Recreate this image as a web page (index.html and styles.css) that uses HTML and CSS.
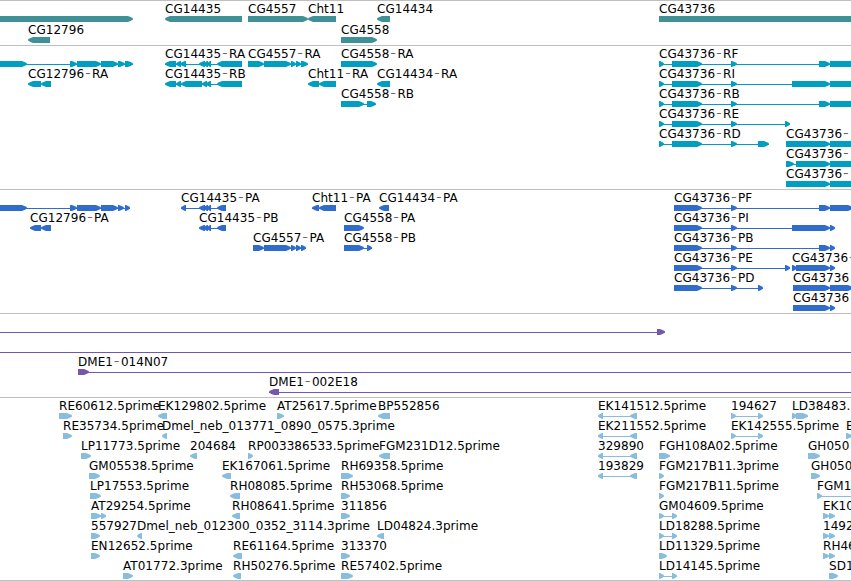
FILE: index.html
```
<!DOCTYPE html>
<html lang="en">
<head>
    <meta charset="UTF-8">
    <title>Genome browser</title>
    <link rel="stylesheet" href="styles.css">
</head>
<body>
    <div class="browser" id="browser"></div>
    <script src="tracks.js"></script>
</body>
</html>
```
FILE: styles.css
```
body {
    margin: 0;
    background-color: #ffffff;
    font-family: "DejaVu Sans", sans-serif;
}
.browser {
    display: flex;
    flex-direction: column;
    height: 581px;
    overflow: hidden;
}
.track {
    box-sizing: border-box;
    flex: none;
    border-top: 1px solid #bfbfbf;
}
.track svg {
    display: block;
    width: 100%;
    height: 100%;
    overflow: visible;
}
.track text {
    font-size: 12px;
    letter-spacing: 0.04px;
    fill: #000000;
    white-space: pre;
}
.track .dash {
    font-size: 16px;
    font-weight: 200;
    fill: #222222;
}
.gene {
    height: 45px;
    color: #3f9097;
}
.transcript {
    height: 144px;
    color: #009fc2;
}
.cds {
    height: 124px;
    color: #306bce;
}
.bac {
    height: 84px;
    color: #7557ab;
}
.est {
    height: 183px;
    color: #89bdde;
}
.end {
    height: 1px;
}
.exon,
.intron {
    fill: currentColor;
}
```
FILE: tracks.js
```
// feature: [row, label, strand, exons, end of line (optional)]
const pe = [[598, 603], [630, 637]];
const ek = [[731, 736], [758, 763]];
const ld = [[659, 664], [672, 677]];
const pair = [[823, 829], [829, 835]];
const start = [[659, 664], [672, 702], [731, 737]];
const coding = [[674, 702], [731, 737]];

const tracks = [
    { name: 'gene', pitch: 21, features: [
        [0, '', 1, [[-10, 133]]],
        [0, 'CG14435', -1, [[165, 242]]],
        [0, 'CG4557', 1, [[248, 308]]],
        [0, 'Cht11', -1, [[308, 336]]],
        [0, 'CG14434', -1, [[377, 390]]],
        [0, 'CG43736', 1, [[659, 870]]],
        [1, 'CG12796', -1, [[28, 50]]],
        [1, 'CG4558', 1, [[341, 377]]]
    ] },
    { name: 'transcript', pitch: 20, features: [
        [0, '', 1, [[-10, 27], [70, 77], [77, 101], [101, 118], [118, 125], [125, 133]]],
        [0, 'CG14435-RA', -1, [[165, 176], [176, 181], [180, 186], [199, 205], [204, 208], [207, 211], [217, 242]]],
        [0, 'CG4557-RA', 1, [[248, 264], [264, 291], [291, 296], [296, 301], [301, 308]]],
        [0, 'CG4558-RA', 1, [[341, 377]]],
        [0, 'CG43736-RF', 1, [...start, [819, 830], [830, 870]]],
        [1, 'CG12796-RA', -1, [[28, 41], [41, 51]]],
        [1, 'CG14435-RB', -1, [[165, 176], [176, 181], [181, 202], [202, 207], [206, 211], [217, 242]]],
        [1, 'Cht11-RA', -1, [[308, 319], [319, 336]]],
        [1, 'CG14434-RA', -1, [[377, 390]]],
        [1, 'CG43736-RI', 1, [...start, [792, 830], [830, 870]]],
        [2, 'CG4558-RB', 1, [[341, 364], [367, 376]]],
        [2, 'CG43736-RB', 1, [...start, [819, 830], [830, 870]]],
        [3, 'CG43736-RE', 1, [...start, [785, 790]]],
        [4, 'CG43736-RD', 1, [...start, [758, 769]]],
        [4, 'CG43736-', 1, [[786, 830], [830, 870]]],
        [5, 'CG43736-', 1, [[786, 794], [796, 830], [830, 870]]],
        [6, 'CG43736-', 1, [[786, 830], [830, 870]]]
    ] },
    { name: 'cds', pitch: 20, features: [
        [0, '', 1, [[-10, 27], [70, 77], [77, 101], [101, 118], [118, 124], [125, 130]]],
        [0, 'CG14435-PA', -1, [[181, 186], [199, 205], [204, 208], [207, 211], [217, 226]]],
        [0, 'Cht11-PA', -1, [[312, 319], [319, 336]]],
        [0, 'CG14434-PA', -1, [[379, 389]]],
        [0, 'CG43736-PF', 1, [...coding, [819, 830], [830, 853]]],
        [1, 'CG12796-PA', -1, [[30, 41], [41, 51]]],
        [1, 'CG14435-PB', -1, [[199, 205], [204, 208], [207, 211], [217, 226]]],
        [1, 'CG4558-PA', 1, [[344, 364]]],
        [1, 'CG43736-PI', 1, [...coding, [792, 830], [830, 835]]],
        [2, 'CG4557-PA', 1, [[253, 264], [264, 291], [291, 296], [296, 301], [301, 306]]],
        [2, 'CG4558-PB', 1, [[344, 364], [367, 372]]],
        [2, 'CG43736-PB', 1, [...coding, [819, 830], [830, 835]]],
        [3, 'CG43736-PE', 1, [...coding, [785, 790]]],
        [3, 'CG43736-', 1, [[792, 797], [796, 830], [830, 835]]],
        [4, 'CG43736-PD', 1, [...coding, [758, 763]]],
        [4, 'CG43736', 1, [[793, 830], [830, 853]]],
        [5, 'CG43736', 1, [[793, 830], [830, 835]]]
    ] },
    { name: 'bac', pitch: 20, features: [
        [0, '', 1, [[-10, -4], [657, 665]]],
        [1, '', 1, [[-10, -4]], 870],
        [2, 'DME1-014N07', 1, [[78, 89]], 870],
        [3, 'DME1-002E18', -1, [[269, 279]], 870]
    ] },
    { name: 'est', pitch: 20, features: [
        [0, 'RE60612.5prime', 1, [[59, 72]]],
        [0, 'EK129802.5prime', -1, [[158, 167]]],
        [0, 'AT25617.5prime', 1, [[277, 284]]],
        [0, 'BP552856', -1, [[378, 390]]],
        [0, 'EK141512.5prime', -1, pe],
        [0, '194627', 1, ek],
        [0, 'LD38483.', 1, [[792, 797], [796, 808]]],
        [1, 'RE35734.5prime', 1, [[63, 72]]],
        [1, 'Dmel_neb_013771_0890_0575.3prime', -1, [[162, 167]]],
        [1, 'EK211552.5prime', -1, pe],
        [1, 'EK142555.5prime', 1, ek],
        [1, 'E', 1, [[846, 852]]],
        [2, 'LP11773.5prime', 1, [[81, 91]]],
        [2, '204684', -1, [[190, 197]]],
        [2, 'RP003386533.5prime', 1, [[248, 253]]],
        [2, 'FGM231D12.5prime', -1, [[379, 390]]],
        [2, '329890', -1, pe],
        [2, 'FGH108A02.5prime', 1, [[659, 670]]],
        [2, 'GH050', 1, [[808, 820]]],
        [3, 'GM05538.5prime', 1, [[89, 100]]],
        [3, 'EK167061.5prime', -1, [[222, 231]]],
        [3, 'RH69358.5prime', 1, [[341, 353]]],
        [3, '193829', -1, pe],
        [3, 'FGM217B11.3prime', 1, [[659, 664]]],
        [3, 'GH050', 1, [[811, 820]]],
        [4, 'LP17553.5prime', 1, [[90, 101]]],
        [4, 'RH08085.5prime', -1, [[230, 240]]],
        [4, 'RH53068.5prime', 1, [[341, 350]]],
        [4, 'FGM217B11.5prime', 1, [[659, 664]]],
        [4, 'FGM1', 1, [[817, 822]], 870],
        [5, 'AT29254.5prime', 1, [[91, 101], [101, 106]]],
        [5, 'RH08641.5prime', -1, [[232, 240]]],
        [5, '311856', 1, [[341, 350]]],
        [5, 'GM04609.5prime', 1, ld],
        [5, 'EK10', 1, pair],
        [6, '557927', 1, [[91, 100]]],
        [6, 'Dmel_neb_012300_0352_3114.3prime', -1, [[137, 142]]],
        [6, 'LD04824.3prime', -1, [[377, 384]]],
        [6, 'LD18288.5prime', 1, ld],
        [6, '1492', 1, pair],
        [7, 'EN12652.5prime', 1, [[91, 100]]],
        [7, 'RE61164.5prime', -1, [[233, 242]]],
        [7, '313370', 1, [[341, 350]]],
        [7, 'LD11329.5prime', 1, [[659, 667]]],
        [7, 'RH46', 1, pair],
        [8, 'AT01772.3prime', 1, [[123, 133]]],
        [8, 'RH50276.5prime', -1, [[233, 241]]],
        [8, 'RE57402.5prime', 1, [[341, 353]]],
        [8, 'LD14145.5prime', 1, ld],
        [8, 'SD1', 1, [[829, 838]]]
    ] },
    { name: 'end', pitch: 0, features: [] }
];

// block with a rounded point in the direction of the strand
function exon(x1, x2, y, strand) {
    const tip = Math.min(5, x2 - x1 - 1);
    const from = strand > 0 ? x1 : x2;
    const to = strand > 0 ? x2 : x1;
    const neck = to - strand * tip;
    const bend = to - strand * tip * 0.4;
    return `<polygon class="exon" points="${from},${y} ${neck},${y} ${bend},${y + 1.3} ${to},${y + 2.4} ${to},${y + 3.6} ${bend},${y + 4.7} ${neck},${y + 6} ${from},${y + 6}"/>`;
}

function labelText(label) {
    return label.replace(/-(.*)/, '<tspan class="dash" dx="0.8">-</tspan><tspan dx="1.3">$1</tspan>');
}

function drawTrack(track) {
    let shapes = '';
    track.features.forEach(([row, label, strand, exons, end]) => {
        // the track border takes the first pixel
        const top = row * track.pitch - 1;
        const x = exons[0][0];
        const last = end || exons[exons.length - 1][1];
        if (exons.length > 1 || end) {
            shapes += `<rect class="intron" x="${x}" y="${top + 19}" width="${last - x}" height="1"/>`;
        }
        exons.forEach(([x1, x2]) => {
            shapes += exon(x1, x2, top + 16, strand);
        });
        if (label) {
            shapes += `<text x="${x}" y="${top + 13}">${labelText(label)}</text>`;
        }
    });
    return `<div class="track ${track.name}"><svg>${shapes}</svg></div>`;
}

document.getElementById('browser').innerHTML = tracks.map(drawTrack).join('');
```
